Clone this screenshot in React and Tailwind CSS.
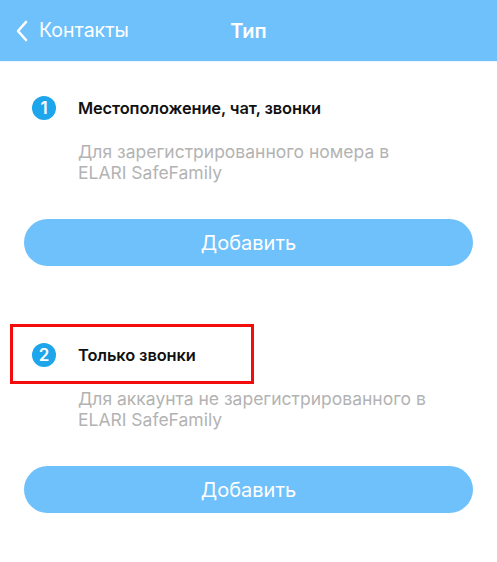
import React from 'react';

const BLUE = 'bg-[#6fc1fc]';

const Step = ({ num, title, subtitle, highlight }) => (
  <div>
    <div className="relative flex items-center h-6 pl-8">
      {highlight && (
        <div className="absolute left-[10px] top-[-19px] w-[244px] h-[60px] border-[3px] border-[#f20c0c]"></div>
      )}
      <div className="w-6 h-6 rounded-full bg-[#1ea6ec] text-white flex items-center justify-center text-[17px] font-semibold leading-none">
        {num}
      </div>
      <div className="ml-[22px] text-[16.4px] font-semibold text-[#111] tracking-[-0.1px]">{title}</div>
    </div>
    <div className="mt-[21px] pl-[78px] pr-4 text-[17.5px] leading-[21px] text-[#b3b3b3]">
      {subtitle}
    </div>
  </div>
);

const AddButton = () => (
  <button className={`w-full h-[47px] rounded-full ${BLUE} text-white text-[20px] leading-none`}>
    Добавить
  </button>
);

export default function App() {
  return (
    <div className="w-[497px] h-[562px] bg-white font-['Inter','Noto_Sans',sans-serif] overflow-hidden">
      {/* Header */}
      <div className={`relative h-[62px] ${BLUE} flex items-center justify-center border-b border-[#e9f4fd]`}>
        <div className="absolute left-[14px] top-0 h-full flex items-center text-white">
          <svg width="16" height="22" viewBox="0 0 16 22" fill="none">
            <path d="M12 2 L4 11 L12 20" stroke="white" strokeWidth="2.6" strokeLinecap="round" strokeLinejoin="round" />
          </svg>
          <span className="ml-[9px] text-[19.5px]">Контакты</span>
        </div>
        <span className="text-white text-[20px] font-semibold">Тип</span>
      </div>

      <div className="mt-[34px]">
        <Step
          num="1"
          title="Местоположение, чат, звонки"
          subtitle={<>Для зарегистрированного номера в<br />ELARI SafeFamily</>}
        />
      </div>
      <div className="px-6 mt-[36px]">
        <AddButton />
      </div>

      <div className="mt-[77px]">
        <Step
          num="2"
          title="Только звонки"
          highlight
          subtitle={<>Для аккаунта не зарегистрированного в<br />ELARI SafeFamily</>}
        />
      </div>
      <div className="px-6 mt-[36px]">
        <AddButton />
      </div>
    </div>
  );
}
